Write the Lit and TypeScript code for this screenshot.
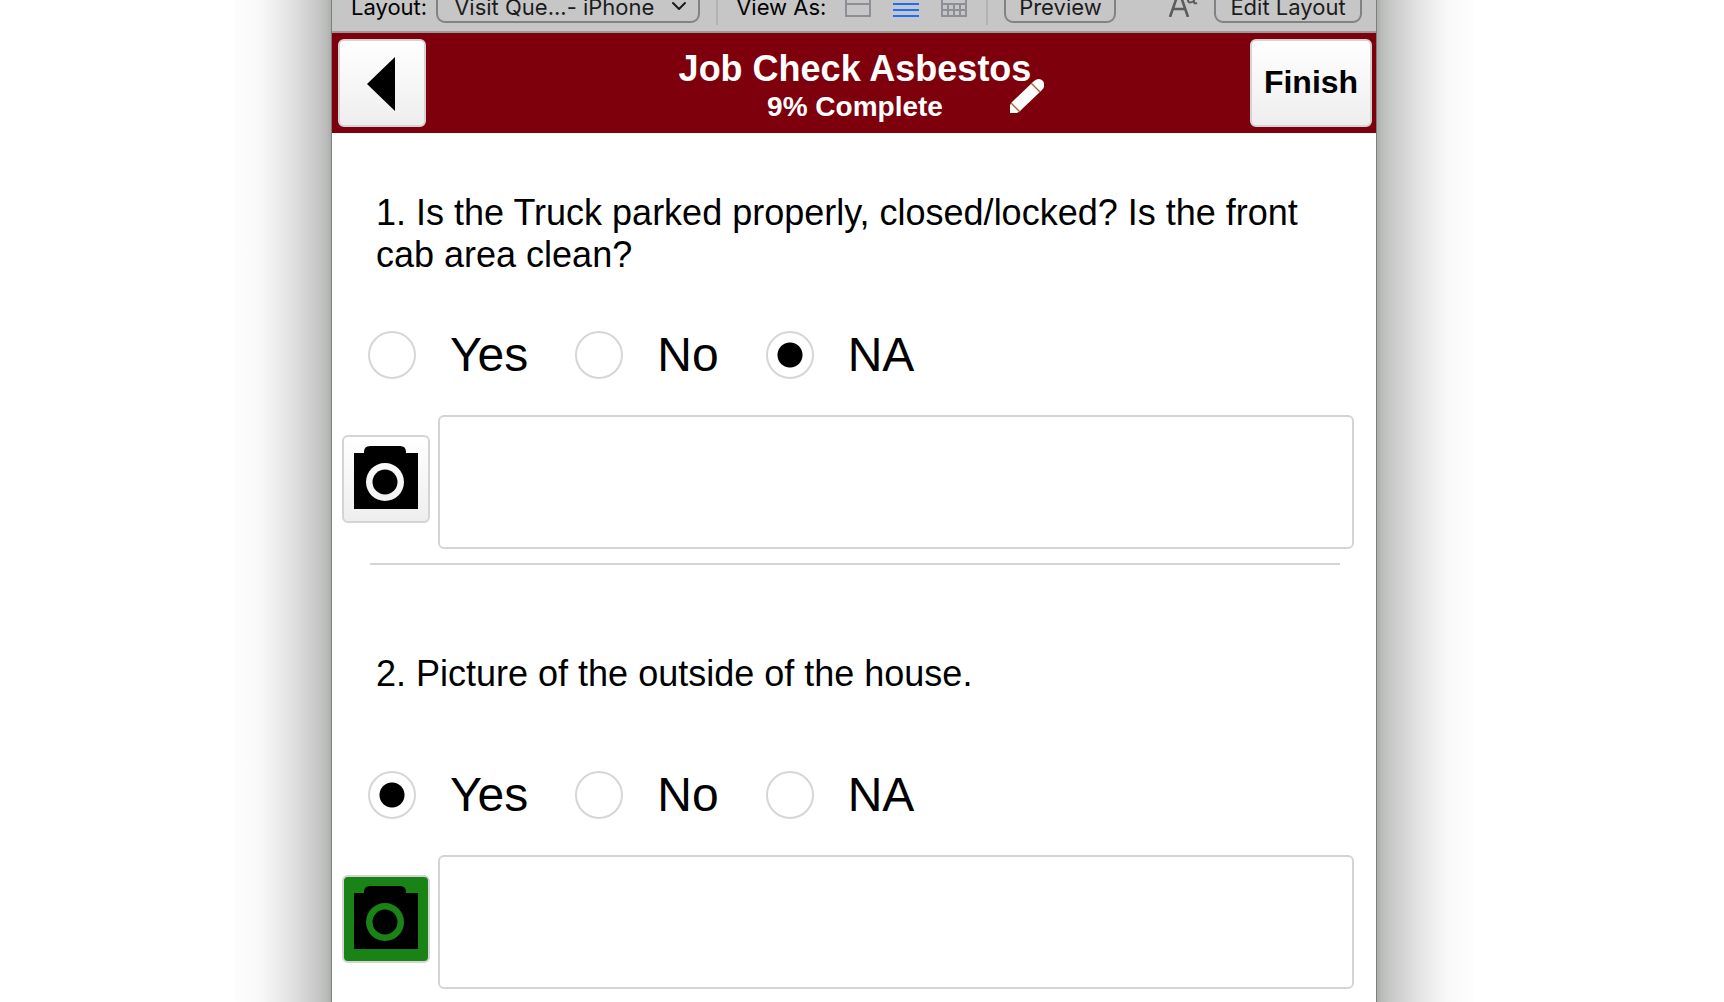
import { LitElement, html, css } from "lit";
import { customElement, property } from "lit/decorators.js";

interface Question {
  id: string;
  text: string;
  answer: string;
  hasPhoto: boolean;
}

const QUESTIONS: Question[] = [
  {
    id: "q1",
    text: "1. Is the Truck parked properly, closed/locked? Is the front cab area clean?",
    answer: "NA",
    hasPhoto: false,
  },
  {
    id: "q2",
    text: "2. Picture of the outside of the house.",
    answer: "Yes",
    hasPhoto: true,
  },
];

const ANSWERS = ["Yes", "No", "NA"];

@customElement("layout-toolbar")
class LayoutToolbar extends LitElement {
  static styles = css`
    :host {
      display: block;
    }
    .bar {
      display: flex;
      align-items: flex-end;
      height: 33px;
      box-sizing: border-box;
      padding: 0 14px 8px 19px;
      border-bottom: 2px solid #999999;
      background: #c6c6c6;
      color: #111111;
      font: 22px/32px Inter, "Liberation Sans", sans-serif;
      white-space: nowrap;
    }
    .label {
      color: #000000;
    }
    .views-label {
      padding-left: 2px;
    }
    .picker {
      position: relative;
      flex: 0 0 264px;
      margin-left: 9px;
    }
    .select,
    .button {
      display: block;
      box-sizing: border-box;
      height: 32px;
      margin: 0;
      border: 2px solid #828284;
      border-radius: 9px;
      background: transparent;
      color: #1c1c1e;
      font: inherit;
      line-height: 28px;
    }
    .select {
      width: 100%;
      padding: 0 40px 0 16px;
      appearance: none;
    }
    .button {
      padding: 0;
    }
    .preview {
      width: 112px;
    }
    .edit {
      width: 148px;
    }
    .chevron {
      position: absolute;
      right: 13px;
      top: 9px;
      width: 16px;
      height: 12px;
      pointer-events: none;
    }
    .separator {
      width: 2px;
      height: 36px;
      margin: 0 16px -2px;
      background: #b2b2b3;
    }
    .views {
      display: flex;
      gap: 22px;
      margin: 0 3px 0 19px;
      padding-bottom: 6px;
    }
    .view {
      width: 26px;
      height: 26px;
      padding: 0;
      border: 0;
      background: none;
    }
    .view svg,
    .chevron svg,
    .format svg {
      display: block;
    }
    .format {
      margin-left: auto;
      margin-right: 16px;
      padding: 0 0 6px;
      border: 0;
      background: none;
    }
  `;

  render() {
    return html`
      <div class="bar">
        <label class="label" for="layout">Layout:</label>
        <span class="picker">
          <select class="select" id="layout">
            <option>Visit Que...- iPhone</option>
          </select>
          <span class="chevron">
            <svg width="16" height="12" viewBox="0 0 16 12" fill="none" stroke="#1c1c1e" stroke-width="2" stroke-linecap="round" stroke-linejoin="round">
              <path d="M2 3l6 6 6-6" />
            </svg>
          </span>
        </span>
        <span class="separator"></span>
        <span class="label views-label">View As:</span>
        <span class="views">
          <button class="view" aria-label="Form view">
            <svg width="26" height="26" viewBox="0 0 26 26" fill="none" stroke="#8e8e96" stroke-width="2">
              <path d="M1 1h24v24H1zM1 13h24" />
            </svg>
          </button>
          <button class="view" aria-label="List view">
            <svg width="26" height="26" viewBox="0 0 26 26" fill="none" stroke="#1a6dff" stroke-width="2">
              <path d="M0 1h26M0 7h26M0 13h26M0 19h26M0 25h26" />
            </svg>
          </button>
          <button class="view" aria-label="Table view">
            <svg width="26" height="26" viewBox="0 0 26 26" fill="none" stroke="#8e8e96" stroke-width="2">
              <path d="M1 1h24v24H1zM1 13h24M1 19h24M7 13v12M13 13v12M19 13v12" />
            </svg>
          </button>
        </span>
        <span class="separator"></span>
        <button class="button preview">Preview</button>
        <button class="format" aria-label="Formatting">
          <svg width="30" height="30" viewBox="0 0 30 30" fill="none" stroke="#5c5c5e">
            <path d="M2 30L11 4l9 26M5 22h12" stroke-width="2.6" />
            <path d="M20 10q4-3 6 0v5q0 2 3 1M26 11q-6 0-6 3 1 3 6 0" stroke-width="2" />
          </svg>
        </button>
        <button class="button edit">Edit Layout</button>
      </div>
    `;
  }
}

@customElement("job-header")
class JobHeader extends LitElement {
  static styles = css`
    :host {
      display: block;
    }
    .header {
      display: flex;
      align-items: center;
      justify-content: space-between;
      min-height: 100px;
      box-sizing: border-box;
      padding: 6px 4px 6px 6px;
      background: #7d000c;
      font-family: "Liberation Sans", Arial, sans-serif;
    }
    .side {
      display: flex;
      flex: 0 0 122px;
    }
    .button {
      display: flex;
      align-items: center;
      justify-content: center;
      width: 88px;
      height: 88px;
      padding: 0;
      border: 2px solid #d4d4d4;
      border-radius: 6px;
      background: linear-gradient(#ffffff, #eeeeee);
      color: #000000;
      font: bold 32px/36px "Liberation Sans", Arial, sans-serif;
    }
    .back {
      padding: 2px 2px 0 0;
    }
    .finish {
      width: 122px;
      padding-bottom: 2px;
    }
    .titles {
      position: relative;
      padding-top: 8px;
      color: #ffffff;
      text-align: center;
    }
    .title {
      margin: 0;
      font-size: 36px;
      line-height: 40px;
    }
    .progress {
      margin: 0;
      font-size: 28px;
      font-weight: bold;
      line-height: 36px;
    }
    .pencil {
      position: absolute;
      right: -13px;
      bottom: 12px;
      width: 34px;
      height: 34px;
      padding: 0;
      border: 0;
      background: none;
    }
    .pencil svg {
      display: block;
    }
  `;

  render() {
    return html`
      <header class="header">
        <span class="side">
          <button class="button back" aria-label="Back">
            <svg width="28" height="54" viewBox="0 0 28 54"><path d="M0 27L28 0v54z" /></svg>
          </button>
        </span>
        <div class="titles">
          <h1 class="title">Job Check Asbestos</h1>
          <p class="progress">9% Complete</p>
          <button class="pencil" aria-label="Edit job">
            <svg width="34" height="34" viewBox="0 0 34 34">
              <path d="M0 34v-8l2-3L24 2q5-4 9 0 3 5-1 9L10 32l-3 2z" fill="#ffffff" />
              <path d="M21 4l9 9M1 24l9 9" stroke="#a8642c" stroke-width="1.4" />
            </svg>
          </button>
        </div>
        <button class="button finish">Finish</button>
      </header>
    `;
  }
}

@customElement("question-card")
class QuestionCard extends LitElement {
  @property({ attribute: false }) question!: Question;

  static styles = css`
    :host {
      display: block;
      padding-top: 31px;
      padding-bottom: 8px;
      font-family: "Liberation Sans", Arial, sans-serif;
      color: #000000;
    }
    .text {
      display: flex;
      align-items: center;
      min-height: 140px;
      margin: 0 40px 0 44px;
      font-size: 36px;
      line-height: 42px;
    }
    .answers {
      display: flex;
      gap: 47px;
      margin: 27px 36px 36px;
      padding: 0;
      border: 0;
    }
    .answer {
      display: flex;
      align-items: center;
      gap: 34px;
      font-size: 48px;
      line-height: 48px;
    }
    .radio {
      appearance: none;
      flex: none;
      width: 48px;
      height: 48px;
      margin: 0;
      border: 2px solid #d6d6d6;
      border-radius: 50%;
      background: #ffffff;
    }
    .radio:checked {
      background: radial-gradient(circle, #000000 12px, #ffffff 13px);
    }
    .notes {
      display: flex;
      align-items: flex-start;
      gap: 8px;
      padding: 0 22px 0 10px;
    }
    .camera {
      display: flex;
      flex: none;
      align-items: center;
      justify-content: center;
      width: 88px;
      height: 88px;
      margin: 20px 0 0;
      padding: 0 0 3px;
      border: 2px solid #d4d4d4;
      border-radius: 6px;
      background: linear-gradient(#ffffff, #eeeeee);
    }
    .camera.taken {
      background: #198316;
    }
    .note {
      flex: 1;
      min-width: 0;
      height: 134px;
      box-sizing: border-box;
      margin: 0;
      padding: 12px;
      border: 2px solid #d4d4d4;
      border-radius: 6px;
      background: #ffffff;
      font: 36px/42px "Liberation Sans", Arial, sans-serif;
      resize: none;
    }
    .rule {
      height: 2px;
      margin: 14px 36px 0 38px;
      border: 0;
      background: #d4d4d4;
    }
  `;

  render() {
    const q = this.question;
    return html`
      <div class="text" id="text">${q.text}</div>
      <fieldset class="answers" aria-labelledby="text">
        ${ANSWERS.map(
          (a) => html`
            <label class="answer">
              <input class="radio" type="radio" name=${q.id} .checked=${a === q.answer} />
              ${a}
            </label>
          `
        )}
      </fieldset>
      <div class="notes">
        <button class="camera ${q.hasPhoto ? "taken" : ""}" aria-label="Add photo">
          <svg width="64" height="63" viewBox="0 0 64 63">
            <path
              fill-rule="evenodd"
              d="M0 7h10v-1q0-6 6-6h30q6 0 6 6v1h12v56H0zM31 17a19 19 0 1 0 0 38 19 19 0 1 0 0-38z"
            />
            <circle cx="31" cy="36" r="12.5" />
          </svg>
        </button>
        <textarea class="note" aria-label="Notes"></textarea>
      </div>
      <hr class="rule" />
    `;
  }
}

@customElement("app-root")
class AppRoot extends LitElement {
  static styles = css`
    :host {
      display: block;
    }
    .desktop {
      display: grid;
      grid-template-columns: minmax(0, 331fr) minmax(0, 1046fr) minmax(0, 347fr);
      height: 100vh;
      overflow: hidden;
      background: #ffffff;
    }
    .shade {
      width: 96px;
      max-width: 100%;
      background: linear-gradient(
        to right,
        #acaeac 0,
        #b9bbb9 4px,
        #c5c6c5 12px,
        #d0d0d0 22px,
        #e2e2e3 40px,
        #eeeeee 56px,
        #f8f8f8 70px,
        #fbfbfb 82px,
        #fdfdfd 96px
      );
    }
    .shade.left {
      justify-self: end;
      transform: scaleX(-1);
    }
    .window {
      min-width: 0;
      overflow: hidden;
      border: solid #7e7e7e;
      border-width: 0 1px;
      background: #ffffff;
    }
  `;

  render() {
    return html`
      <div class="desktop">
        <div class="shade left"></div>
        <main class="window">
          <layout-toolbar></layout-toolbar>
          <job-header></job-header>
          ${QUESTIONS.map((q) => html`<question-card .question=${q}></question-card>`)}
        </main>
        <div class="shade"></div>
      </div>
    `;
  }
}
